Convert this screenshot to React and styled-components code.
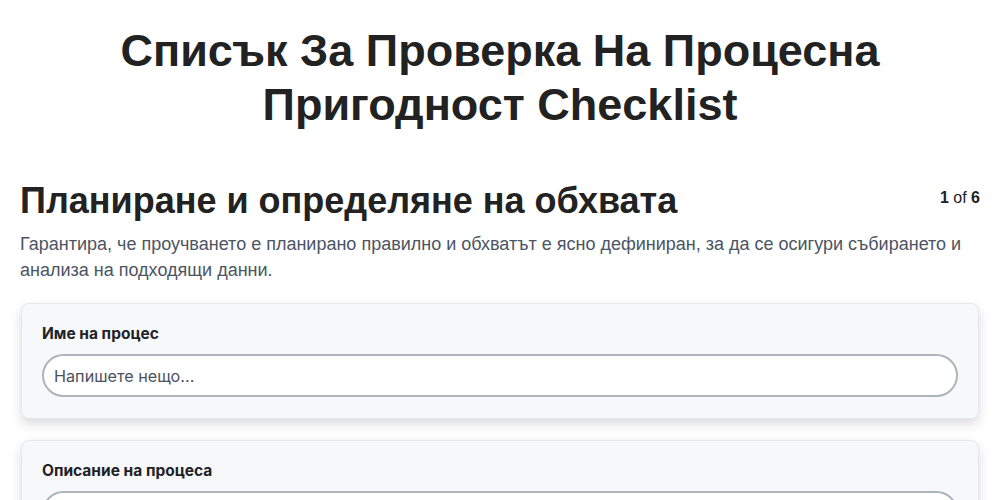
import React from "react";
import styled, { createGlobalStyle } from "styled-components";

const Global = createGlobalStyle`
  html, body { margin: 0; padding: 0; background: #ffffff; }
  body { font-family: "Liberation Sans", Arial, sans-serif; color: #222; }
  * { box-sizing: border-box; }
`;

const Page = styled.div`
  padding: 24px 20px 40px;
`;

const Title = styled.h1`
  margin: 0 0 47px;
  text-align: center;
  font-family: "Liberation Sans", Arial, sans-serif;
  font-weight: 700;
  font-size: 45px;
  line-height: 54px;
  color: #222;
  padding: 0 100px;
`;

const SectionHead = styled.div`
  display: flex;
  justify-content: space-between;
  align-items: flex-start;
`;

const SectionTitle = styled.h2`
  margin: 0;
  font-family: "Liberation Sans", Arial, sans-serif;
  font-weight: 700;
  font-size: 36px;
  line-height: 44px;
  color: #222;
`;

const Counter = styled.div`
  font-size: 16px;
  color: #222;
  padding-top: 10px;
  b { font-weight: 700; }
`;

const Description = styled.p`
  margin: 8px 0 20px;
  font-size: 18px;
  line-height: 26px;
  color: #4b5563;
`;

const Card = styled.div`
  margin: 0 1px 21px;
  background: #f7f8fa;
  border: 1px solid #e5e7eb;
  border-radius: 8px;
  box-shadow: 0 5px 12px rgba(0, 0, 0, 0.14);
  padding: 20px 20px 21px;
`;

const Label = styled.label`
  display: block;
  font-family: Inter, "Noto Sans", sans-serif;
  font-weight: 700;
  font-size: 15.5px;
  line-height: 20px;
  color: #1f2328;
  margin-bottom: 10px;
`;

const Input = styled.input`
  display: block;
  width: 100%;
  height: 43px;
  border: 2px solid #aeb4bb;
  border-radius: 22px;
  background: #fff;
  padding: 0 10px;
  font-family: Inter, "Noto Sans", sans-serif;
  font-size: 16.2px;
  color: #222;
  outline: none;
  &::placeholder { color: #4b5160; }
`;

const fields = [
  { label: "Име на процес" },
  { label: "Описание на процеса" },
];

export default function App() {
  return (
    <>
      <Global />
      <Page>
        <Title>Списък За Проверка На Процесна Пригодност Checklist</Title>
        <SectionHead>
          <SectionTitle>Планиране и определяне на обхвата</SectionTitle>
          <Counter><b>1</b> of <b>6</b></Counter>
        </SectionHead>
        <Description>
          Гарантира, че проучването е планирано правилно и обхватът е ясно дефиниран, за да се осигури събирането и анализа на подходящи данни.
        </Description>
        {fields.map((f) => (
          <Card key={f.label}>
            <Label>{f.label}</Label>
            <Input placeholder="Напишете нещо..." />
          </Card>
        ))}
      </Page>
    </>
  );
}
